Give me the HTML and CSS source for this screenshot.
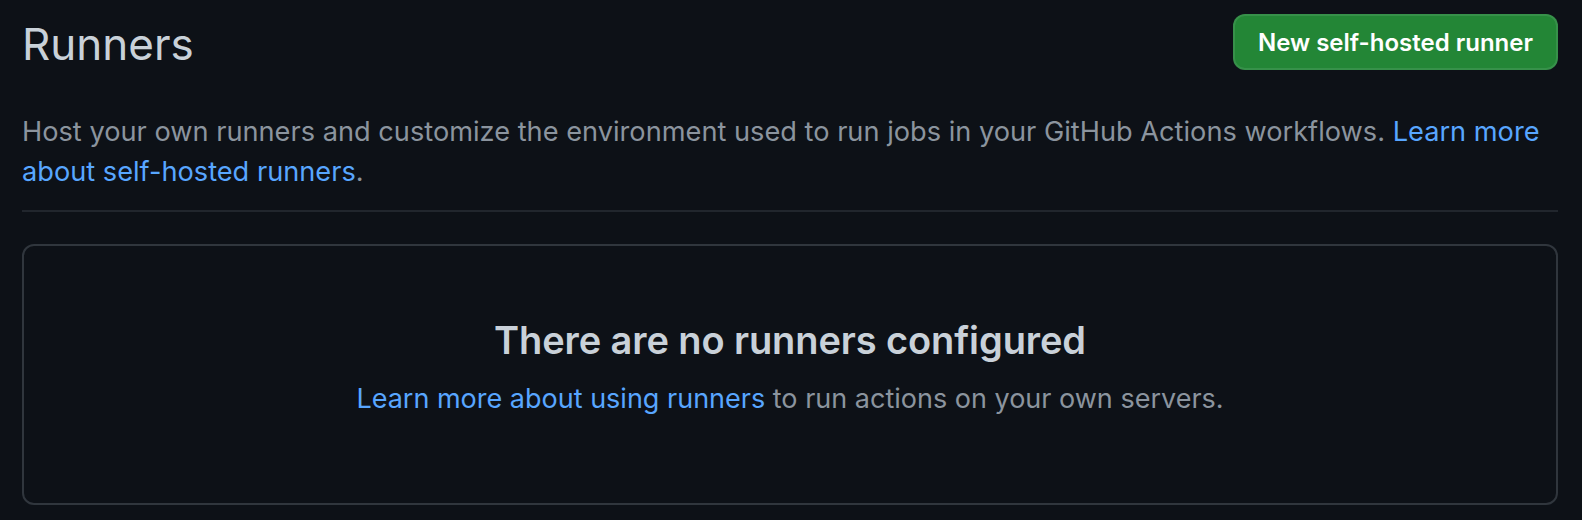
FILE: index.html
```html
<!DOCTYPE html>
<html lang="en">
<head>
<meta charset="utf-8">
<title>Runners</title>
<link rel="stylesheet" href="styles.css">
</head>
<body>
<main class="page">
  <div class="subhead">
    <h2 class="subhead-heading">Runners</h2>
    <button class="btn-primary" type="button">New self-hosted runner</button>
  </div>
  <p class="description">Host your own runners and customize the environment used to run jobs in your GitHub Actions workflows. <a href="#" class="link">Learn more about self-hosted runners</a>.</p>
  <hr class="divider">
  <section class="blankslate">
    <h3 class="blankslate-title">There are no runners configured</h3>
    <p class="blankslate-text"><a href="#" class="link">Learn more about using runners</a> to run actions on your own servers.</p>
  </section>
</main>
</body>
</html>
```

FILE: styles.css
```css
* { box-sizing: border-box; }
html, body {
  margin: 0;
  background: #0d1117;
}
body {
  font-family: Inter, "Noto Sans", "Liberation Sans", sans-serif;
  color: #c9d1d9;
}
.page {
  padding: 14px 24px 0 22px;
}
.subhead {
  display: flex;
  align-items: center;
  justify-content: space-between;
  height: 56px;
}
.subhead-heading {
  margin: 4px 0 0;
  font-size: 44px;
  font-weight: 400;
  line-height: 56px;
  color: #c9d1d9;
}
.btn-primary {
  height: 56px;
  padding: 0 23px;
  font-family: inherit;
  font-size: 24px;
  font-weight: 600;
  color: #ffffff;
  background: #238636;
  border: 2px solid rgba(240, 246, 252, 0.1);
  border-radius: 12px;
}
.description {
  margin: 42px 0 0;
  font-size: 27.2px;
  line-height: 40px;
  color: #8b949e;
}
.link {
  color: #58a6ff;
  text-decoration: none;
}
.divider {
  margin: 18px 0 0;
  border: 0;
  border-top: 2px solid #21262d;
  height: 0;
}
.blankslate {
  margin-top: 32px;
  border: 2px solid #30363d;
  border-radius: 12px;
  padding: 69px 32px 84px;
  text-align: center;
}
.blankslate-title {
  margin: 0;
  font-size: 38px;
  font-weight: 600;
  line-height: 50px;
  letter-spacing: -0.1px;
  color: #c9d1d9;
}
.blankslate-text {
  margin: 14px 0 0;
  font-size: 27px;
  line-height: 40px;
  color: #8b949e;
}
```
